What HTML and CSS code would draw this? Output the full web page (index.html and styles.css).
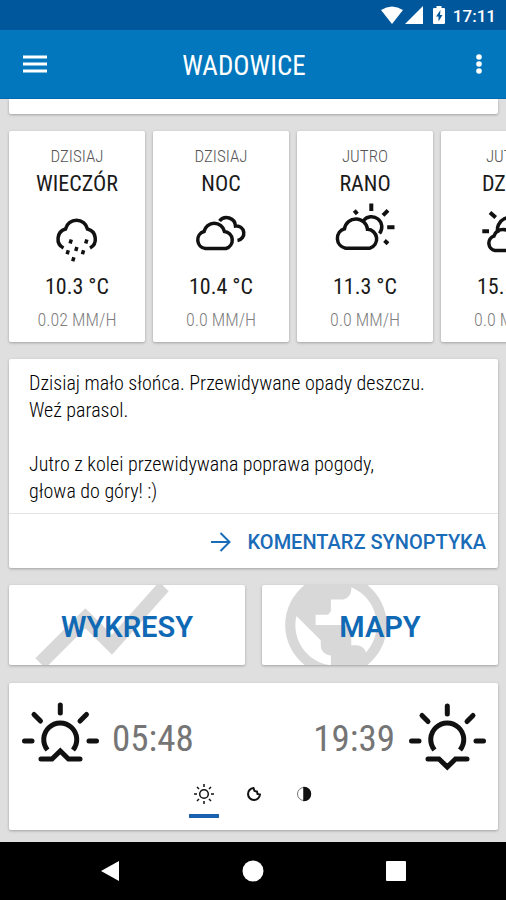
FILE: index.html
```html
<!DOCTYPE html>
<html lang="pl">
<head>
<meta charset="utf-8">
<meta name="viewport" content="width=device-width, initial-scale=1">
<title>Wadowice</title>
<link rel="stylesheet" href="styles.css">
</head>
<body>
<div class="status">
  <svg width="22" height="19" viewBox="0 0 22 19" fill="#fff"><path d="M0 4Q11-3 22 4L11 18Z"/></svg>
  <svg width="18" height="19" viewBox="0 0 18 19" fill="#fff"><path d="M18 0V18H0Z"/></svg>
  <svg class="battery" width="12" height="19" viewBox="0 0 12 19"><path fill="#fff" d="M3.500 2V0h5v2H11q1 0 1 1v14q0 1-1 1H1q-1 0-1-1V3q0-1 1-1z"/><path fill="#01579b" d="M7.500 4 3 10.500h2.500V15.500L9.500 9H7z"/></svg>
  <span class="clock">17:11</span>
</div>
<header class="appbar">
  <button class="icon-btn" aria-label="Menu"><svg width="24" height="18" viewBox="0 0 24 18" stroke="#fff" stroke-width="3"><path d="M0 2H24M0 9H24M0 16H24"/></svg></button>
  <h1>WADOWICE</h1>
  <button class="icon-btn" aria-label="Więcej"><svg width="6" height="20" viewBox="0 0 6 20" fill="#fff"><circle cx="3" cy="3" r="2.800"/><circle cx="3" cy="10" r="2.800"/><circle cx="3" cy="17" r="2.800"/></svg></button>
</header>
<main>
  <div class="card stub"></div>
  <section class="forecast">
    <article class="card slot">
      <p class="day">DZISIAJ</p><h2>WIECZÓR</h2>
      <svg class="weather" viewBox="0 0 136 66"><path d="M54.500 48A10.300 10.300 0 0 1 56.500 29A11.300 11.300 0 0 1 78.500 29A10.300 10.300 0 0 1 81 48"/><path class="drops" d="M62.300 39.500l-1.200 4M77.900 39.500l-1.200 4M67.900 46.900l-1.200 4M59.300 50.200l-1.200 4M74.600 50.200l-1.200 4M64.900 57.200l-1.200 4"/></svg>
      <p class="temp">10.3 °C</p><p class="rain">0.02 MM/H</p>
    </article>
    <article class="card slot">
      <p class="day">DZISIAJ</p><h2>NOC</h2>
      <svg class="weather" viewBox="0 0 136 66"><path d="M52.500 48.500A8.700 8.700 0 0 1 51 31.500A10.500 10.500 0 0 1 71.500 31.500A8.700 8.700 0 0 1 73 48.500Z"/><path d="M66.500 21A9 9 0 0 1 82.500 26A7.200 7.200 0 0 1 84.500 40.500"/></svg>
      <p class="temp">10.4 °C</p><p class="rain">0.0 MM/H</p>
    </article>
    <article class="card slot">
      <p class="day">JUTRO</p><h2>RANO</h2>
      <svg class="weather" viewBox="0 0 136 66"><path d="M48.500 48.200A10 10 0 0 1 47.500 28.800A11.600 11.600 0 0 1 70.500 29.300A9.700 9.700 0 0 1 73 48.200Z"/><path d="M66.500 20.500A9.500 9.500 0 0 1 82.500 33.500"/><path class="rays" d="M74.300 3.500V11M57.300 10.500l3 3.500M91 10.300l-5 5M90.200 27.300H97.500M87.500 40.500l3.500 3.200"/></svg>
      <p class="temp">11.3 °C</p><p class="rain">0.0 MM/H</p>
    </article>
    <article class="card slot">
      <p class="day">JUTRO</p><h2>DZIEŃ</h2>
      <svg class="weather" viewBox="0 0 136 66"><path d="M54 50.500A7.500 7.500 0 0 1 53 36A9.500 9.500 0 0 1 71 36A7.500 7.500 0 0 1 72 50.500Z"/><path d="M57 33A12 12 0 1 1 77 38"/><path class="rays" d="M41.300 31.300H48M49 12.500l5.700 5M68 4v7M87 12.500l-5 5M95 31.300h-7"/></svg>
      <p class="temp">15.5 °C</p><p class="rain">0.0 MM/H</p>
    </article>
  </section>
  <section class="card comment">
    <div class="text"><p>Dzisiaj mało słońca. Przewidywane opady deszczu.<br>Weź parasol.</p><p>Jutro z kolei przewidywana poprawa pogody,<br>głowa do góry! :)</p></div>
    <a class="more" href="#"><svg width="20" height="20" viewBox="0 0 20 20" fill="none" stroke="#1a6bb8" stroke-width="2"><path d="M0 10H18M9.500 1 18.500 10 9.500 19"/></svg>KOMENTARZ SYNOPTYKA</a>
  </section>
  <nav class="links">
    <a class="card" href="#"><svg width="160" height="160" viewBox="0 0 24 24"><path d="M3.500 18.490l6-6.010 4 4L22 6.920l-1.410-1.410-7.090 7.970-4-4L2 16.990z"/></svg><span>WYKRESY</span></a>
    <a class="card" href="#"><svg width="122" height="122" viewBox="0 0 24 24"><path d="M12 2C6.480 2 2 6.480 2 12s4.480 10 10 10 10-4.480 10-10S17.520 2 12 2zm-1 17.930c-3.950-.49-7-3.850-7-7.930 0-.62.08-1.210.21-1.790L9 15v1c0 1.100.9 2 2 2v1.930zm6.900-2.540c-.26-.81-1-1.390-1.900-1.390h-1v-3c0-.55-.45-1-1-1H8v-2h2c.55 0 1-.45 1-1V7h2c1.100 0 2-.9 2-2v-.41c2.930 1.190 5 4.060 5 7.410 0 2.080-.8 3.970-2.100 5.390z"/></svg><span>MAPY</span></a>
  </nav>
  <section class="card sun">
    <div class="times">
      <div class="time"><svg width="80" height="72" viewBox="0 0 80 72"><path d="M40.300 4V12M4.500 40H12M69 40H76.500M14 13.500l6.500 6.500M66.500 13.500l-6.500 6.500"/><path class="arc" d="M27.500 49A16.500 16.500 0 1 1 53 49"/><path d="M21 58H32L40.300 50 48.500 58H60"/></svg><span>05:48</span></div>
      <div class="time"><span>19:39</span><svg width="80" height="72" viewBox="0 0 80 72"><path d="M40.300 5V13M4.500 40H12M69 40H76.500M15 14.500l6 6M66 14.500l-6 6"/><path class="arc" d="M27.500 49A16.500 16.500 0 1 1 53 49"/><path d="M21 58H32L40.300 66 48.500 58H60"/></svg></div>
    </div>
    <div class="tabs">
      <button class="active" aria-label="Słońce"><svg width="20" height="20" viewBox="0 0 20 20"><circle cx="10" cy="10" r="4.300"/><path d="M10 0V3M10 17v3M0 10H3M17 10h3M3 3l2 2M15 15l2 2M17 3l-2 2M5 15l-2 2"/></svg></button>
      <button aria-label="Księżyc"><svg width="20" height="20" viewBox="0 0 20 20"><path class="moon" d="M9.500 4A6 6 0 1 0 16 10.500L13.500 10 13 7.500 10.500 7Z"/></svg></button>
      <button aria-label="Faza"><svg width="20" height="20" viewBox="0 0 20 20"><circle class="ring" cx="10" cy="10" r="6.500"/><path class="half" d="M10 3.500A6.500 6.500 0 0 1 10 16.500Z"/></svg></button>
    </div>
  </section>
</main>
<footer class="navbar">
  <button aria-label="Wstecz"><svg width="20" height="20" viewBox="0 0 20 20"><path d="M19 0V20L1 10Z"/></svg></button>
  <button aria-label="Ekran główny"><svg width="22" height="22" viewBox="0 0 22 22"><circle cx="11" cy="11" r="10.500"/></svg></button>
  <button aria-label="Ostatnie"><svg width="20" height="20" viewBox="0 0 20 20"><rect x="0" y="0" width="20" height="20" rx="1"/></svg></button>
</footer>
</body>
</html>
```
FILE: styles.css
```css
* { box-sizing: border-box; margin: 0; padding: 0; }
body {
  min-height: 100vh;
  display: flex;
  flex-direction: column;
  overflow-x: hidden;
  background: #dfdfdf;
  color: #1a1a1a;
  font-family: "Roboto Condensed", "Liberation Sans Narrow", Roboto, sans-serif;
}
button { border: 0; background: none; cursor: pointer; }
a { text-decoration: none; }
svg { display: block; flex: none; }
.status {
  height: 30px;
  padding: 0 10px;
  display: flex;
  align-items: center;
  justify-content: flex-end;
  gap: 2px;
  background: #01579b;
  color: #fff;
}
.battery { margin: 0 6px 0 8px; }
.clock { padding-top: 2px; font: 500 17px/24px Roboto, sans-serif; }
.appbar {
  height: 69px;
  padding: 0 12px;
  display: flex;
  align-items: center;
  background: #0277bd;
  border-bottom: 1px solid #0568ae;
  color: #fff;
}
.appbar h1 {
  flex: 1;
  padding-top: 4px;
  text-align: center;
  font-size: 27px;
  line-height: 32px;
  font-weight: 400;
}
.icon-btn { width: 46px; height: 48px; display: grid; place-items: center; }
.icon-btn:last-child { width: 30px; margin-left: 34px; }
main { flex: 1; padding: 0 8px 12px 9px; overflow: hidden; }
.card {
  background: #fff;
  border-radius: 2px;
  box-shadow: 0 1px 3px rgba(0, 0, 0, 0.28);
}
.stub { height: 15px; margin-bottom: 17px; border-radius: 0 0 2px 2px; }
.forecast { display: flex; gap: 8px; margin-bottom: 17px; }
.slot {
  flex: 0 0 136px;
  padding: 14px 0 10px;
  text-align: center;
}
.day { font-size: 17px; line-height: 22px; color: #555; font-weight: 300; }
.slot h2 { font-size: 22px; line-height: 33px; font-weight: 400; }
.weather {
  width: 100%;
  height: 66px;
  fill: none;
  stroke: #111;
  stroke-width: 3.5;
}
.rays { stroke-width: 4; }
.temp { font-size: 22px; line-height: 42px; }
.rain { font-size: 18px; line-height: 24px; color: #808080; font-weight: 300; }
.comment { margin-bottom: 17px; }
.text {
  padding: 11px 20px 8px;
  border-bottom: 1px solid #e4e4e4;
  color: #000;
  font-size: 20px;
  line-height: 27px;
  font-weight: 300;
}
.text p + p { margin-top: 27px; }
.more {
  height: 54px;
  padding: 2px 12px 0;
  display: flex;
  align-items: center;
  justify-content: flex-end;
  gap: 17px;
  color: #1a6bb8;
  font: 500 20px/28px Roboto, sans-serif;
}
.links { display: grid; grid-template-columns: 1fr 1fr; gap: 17px; margin-bottom: 18px; }
.links a {
  position: relative;
  height: 80px;
  padding-top: 3px;
  display: grid;
  place-items: center;
  overflow: hidden;
  color: #0f69b4;
  font: 600 29px/36px Roboto, sans-serif;
}
.links svg {
  position: absolute;
  left: 13px;
  top: 50%;
  transform: translateY(-50%);
  fill: #d8d8d8;
}
.links span { position: relative; }
.sun { padding: 18px 11px 12px; }
.times { display: flex; justify-content: space-between; }
.time {
  display: flex;
  align-items: center;
  gap: 12px;
  color: #757575;
  font-size: 37px;
  line-height: 48px;
}
.time span { padding-top: 4px; }
.time svg { fill: none; stroke: #111; stroke-width: 5; stroke-linecap: round; }
.time .arc { stroke-linecap: butt; }
.tabs { display: flex; justify-content: center; gap: 20px; }
.tabs button {
  width: 30px;
  height: 45px;
  padding-top: 11px;
  display: flex;
  justify-content: center;
  border-bottom: 4px solid transparent;
}
.tabs .active { border-color: #1a62b0; }
.tabs svg { fill: none; stroke: #111; stroke-width: 1.5; }
.tabs .moon { stroke-width: 2; }
.tabs .ring { stroke: #777; stroke-width: 1; }
.tabs .half { fill: #111; }
.navbar {
  height: 58px;
  padding: 0 88px;
  display: flex;
  align-items: center;
  justify-content: space-between;
  background: #000;
}
.navbar button { width: 44px; height: 44px; display: grid; place-items: center; }
.navbar svg { fill: #fff; }
```
